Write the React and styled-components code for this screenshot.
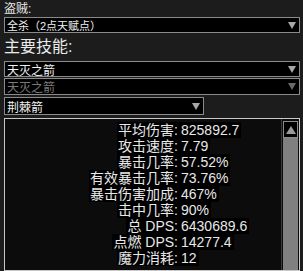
import React from "react";
import styled, { createGlobalStyle } from "styled-components";

const Global = createGlobalStyle`
  html, body { margin: 0; padding: 0; background: #1c1c1c; }
  body { font-family: "Liberation Sans", "Noto Sans CJK SC", sans-serif; color: #e8e8e8; }
`;

const Page = styled.div`
  width: 303px;
  height: 271px;
  overflow: hidden;
  padding: 2px 3px 0 4px;
  box-sizing: border-box;
  display: flex;
  flex-direction: column;
`;

const Label = styled.div`
  font-size: ${(p) => p.$size}px;
  line-height: ${(p) => p.$lh}px;
  color: #eaeaea;
  margin-top: ${(p) => p.$mt || 0}px;
  margin-bottom: ${(p) => p.$mb || 0}px;
`;

const Select = styled.div`
  width: ${(p) => p.$w || "296px"};
  height: ${(p) => p.$h || 16}px;
  box-sizing: border-box;
  border: 1px solid #8a8a8a;
  background: #000;
  display: flex;
  align-items: center;
  justify-content: space-between;
  padding: 0 3px 0 2px;
  margin-bottom: ${(p) => p.$mb || 0}px;
  font-size: ${(p) => p.$fs || 12}px;
  color: ${(p) => (p.$disabled ? "#7a7a7a" : "#f0f0f0")};
`;

const Arrow = styled.span`
  width: 0;
  height: 0;
  border-left: 4px solid transparent;
  border-right: 4px solid transparent;
  border-top: 7px solid ${(p) => (p.$disabled ? "#6a6a6a" : "#a8a8a8")};
`;

const Panel = styled.div`
  margin-top: 3px;
  width: 296px;
  height: 160px;
  box-sizing: border-box;
  border: 1px solid #c8c8c8;
  background: #0c0c0c;
  display: flex;
`;

const Stats = styled.div`
  flex: 1;
  padding-top: 3px;
  display: grid;
  grid-template-columns: 173px auto;
  align-content: start;
`;

const Key = styled.span`
  justify-self: end;
  background: #000;
  font-size: 14px;
  line-height: 16px;
  height: 16px;
  padding-left: 1px;
  white-space: nowrap;
`;

const Val = styled.span`
  justify-self: start;
  background: #000;
  font-size: 14px;
  line-height: 16px;
  height: 16px;
  padding-left: 3px;
  padding-right: 2px;
  white-space: nowrap;
`;

const Scroll = styled.div`
  width: 15px;
  margin-right: 1px;
  display: flex;
  flex-direction: column;
  border-left: 1px solid #3a3a3a;
  padding-left: 1px;
`;

const UpBtn = styled.div`
  height: 17px;
  box-sizing: border-box;
  border: 1px solid #8a8a8a;
  background: #000;
  display: flex;
  align-items: center;
  justify-content: center;
  margin-top: 2px;
`;

const UpArrow = styled.span`
  width: 0;
  height: 0;
  border-left: 5px solid transparent;
  border-right: 5px solid transparent;
  border-bottom: 8px solid #9a9a9a;
`;

const Track = styled.div`
  flex: 1;
  background: #808080;
`;

const stats = [
  ["平均伤害:", "825892.7"],
  ["攻击速度:", "7.79"],
  ["暴击几率:", "57.52%"],
  ["有效暴击几率:", "73.76%"],
  ["暴击伤害加成:", "467%"],
  ["击中几率:", "90%"],
  ["总 DPS:", "6430689.6"],
  ["点燃 DPS:", "14277.4"],
  ["魔力消耗:", "12"],
];

export default function App() {
  return (
    <>
      <Global />
      <Page>
        <Label $size={12} $lh={14} $mb={1}>盗贼:</Label>
        <Select $fs={11}>
          <span>全杀（2点天赋点）</span>
          <Arrow />
        </Select>
        <Label $size={16} $lh={20} $mt={4} $mb={4}>主要技能:</Label>
        <Select $mb={1}>
          <span>天灭之箭</span>
          <Arrow />
        </Select>
        <Select $disabled $h={17} $mb={2}>
          <span>天灭之箭</span>
          <Arrow $disabled />
        </Select>
        <Select $w="200px" $h={18}>
          <span>荆棘箭</span>
          <Arrow />
        </Select>
        <Panel>
          <Stats>
            {stats.map(([k, v]) => (
              <React.Fragment key={k}>
                <Key>{k}</Key>
                <Val>{v}</Val>
              </React.Fragment>
            ))}
          </Stats>
          <Scroll>
            <UpBtn>
              <UpArrow />
            </UpBtn>
            <Track />
          </Scroll>
        </Panel>
      </Page>
    </>
  );
}
